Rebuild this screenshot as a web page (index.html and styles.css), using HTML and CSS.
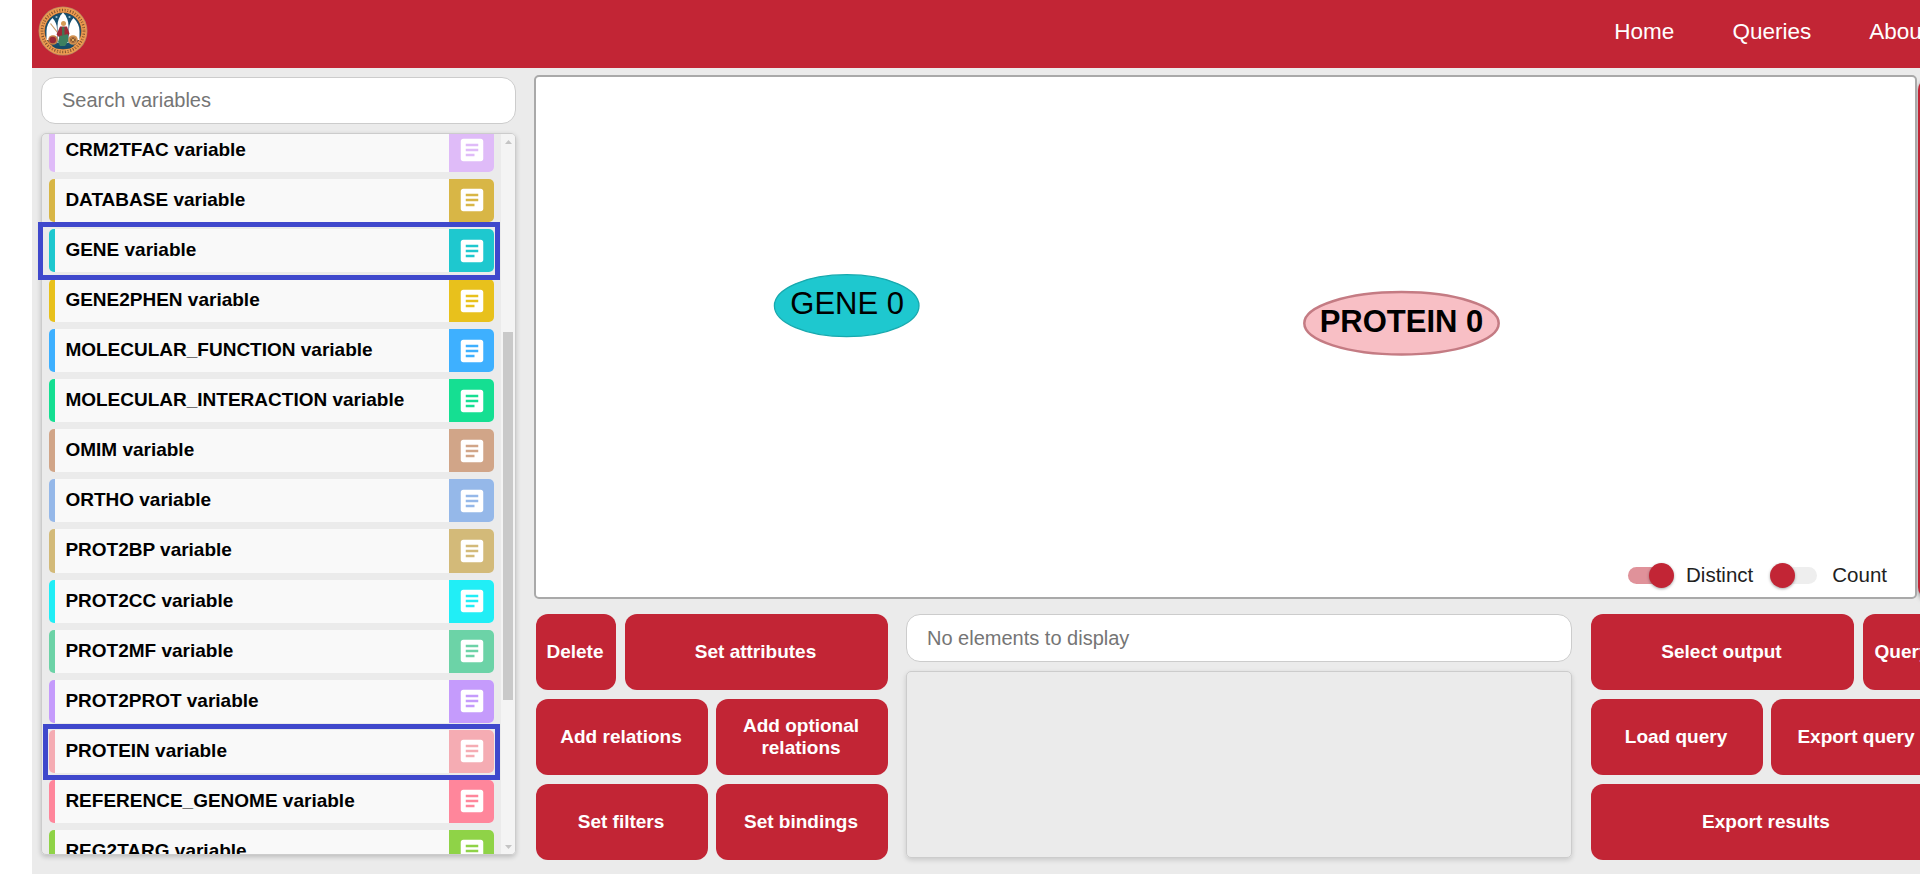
FILE: index.html
```html
<!DOCTYPE html>
<html lang="en">
<head>
<meta charset="utf-8">
<title>Query builder</title>
<link rel="stylesheet" href="styles.css">
</head>
<body>
<svg class="sprite" aria-hidden="true">
  <symbol id="article" viewBox="0 0 24 24">
    <path d="M19 3H5c-1.100 0-2 .9-2 2v14c0 1.100.9 2 2 2h14c1.100 0 2-.9 2-2V5c0-1.100-.9-2-2-2zm-5 14H7v-2h7v2zm3-4H7v-2h10v2zm0-4H7V7h10v2z"/>
  </symbol>
</svg>
<div class="app">
  <header class="topbar">
    <svg class="logo" viewBox="0 0 50 50" aria-label="University seal">
      <circle cx="25" cy="25" r="24.500" fill="#b98560"/>
      <circle cx="25" cy="25" r="23.700" fill="#ee9c50"/>
      <circle cx="25" cy="25" r="21" fill="none" stroke="#5a3824" stroke-width="2.600" stroke-dasharray="1.200 1.500" opacity=".75"/>
      <circle cx="25" cy="25" r="21" fill="none" stroke="#ee9c50" stroke-width=".8" stroke-dasharray="2.100 1.700"/>
      <circle cx="25" cy="25" r="18.500" fill="#7a4a2c"/>
      <circle cx="25" cy="25" r="18" fill="#17506f"/>
      <path d="M25 6.500c-4 4-5.500 8.500-5.500 13.500v17h11V20c0-5-1.500-9.500-5.500-13.500z" fill="#fff"/>
      <path d="M14.500 12c-4 4-6 8-6 13v9H19V23c0-4-1.500-8-4.500-11zM35.500 12c4 4 6 8 6 13v9H31V23c0-4 1.500-8 4.500-11z" fill="#fff"/>
      <circle cx="18.500" cy="11" r="1.100" fill="#9fc0d0"/><circle cx="31.500" cy="11" r="1.100" fill="#9fc0d0"/>
      <path d="M12.500 17.500l7 9" stroke="#c79b6a" stroke-width="1.200"/>
      <circle cx="25.500" cy="17.500" r="2.500" fill="#d59a55"/>
      <path d="M22 20.500h7l2.500 7-2 4h-8l-3-3z" fill="#9d2836"/>
      <path d="M24 21h2.500v8H24z" fill="#487050"/>
      <path d="M21.500 30l8.500-2 .5 7-3.500 5h-5l-2-4z" fill="#3d8060"/>
      <circle cx="15" cy="34" r="4.800" fill="#c67d45"/><circle cx="14.700" cy="34" r="3.300" fill="#982938"/>
      <circle cx="35" cy="34" r="4.800" fill="#d1904f"/><circle cx="35" cy="34" r="2.800" fill="#8c5732"/>
      <path d="M33.500 32.500l3 3m0-3l-3 3" stroke="#e0b05e"/>
      <path d="M14 40h22l-4 2.500H18z" fill="#174b68"/>
    </svg>
    <nav class="nav"><a>Home</a><a>Queries</a><a>About</a></nav>
  </header>
  <main class="main">
    <aside class="sidebar">
      <input class="field search" placeholder="Search variables">
      <div class="list">
        <div class="items">
          <div class="item crm"><span>CRM2TFAC variable</span><i><svg><use href="#article"/></svg></i></div>
          <div class="item db"><span>DATABASE variable</span><i><svg><use href="#article"/></svg></i></div>
          <div class="item gene"><span>GENE variable</span><i><svg><use href="#article"/></svg></i></div>
          <div class="item g2p"><span>GENE2PHEN variable</span><i><svg><use href="#article"/></svg></i></div>
          <div class="item mf"><span>MOLECULAR_FUNCTION variable</span><i><svg><use href="#article"/></svg></i></div>
          <div class="item mi"><span>MOLECULAR_INTERACTION variable</span><i><svg><use href="#article"/></svg></i></div>
          <div class="item omim"><span>OMIM variable</span><i><svg><use href="#article"/></svg></i></div>
          <div class="item ortho"><span>ORTHO variable</span><i><svg><use href="#article"/></svg></i></div>
          <div class="item p2bp"><span>PROT2BP variable</span><i><svg><use href="#article"/></svg></i></div>
          <div class="item p2cc"><span>PROT2CC variable</span><i><svg><use href="#article"/></svg></i></div>
          <div class="item p2mf"><span>PROT2MF variable</span><i><svg><use href="#article"/></svg></i></div>
          <div class="item p2p"><span>PROT2PROT variable</span><i><svg><use href="#article"/></svg></i></div>
          <div class="item prot"><span>PROTEIN variable</span><i><svg><use href="#article"/></svg></i></div>
          <div class="item ref"><span>REFERENCE_GENOME variable</span><i><svg><use href="#article"/></svg></i></div>
          <div class="item reg"><span>REG2TARG variable</span><i><svg><use href="#article"/></svg></i></div>
        </div>
        <div class="scrollbar">
          <svg class="arrow" viewBox="0 0 7 4"><path d="M0 4L3.500 0 7 4z"/></svg>
          <div class="thumb"></div>
          <svg class="arrow" viewBox="0 0 7 4"><path d="M0 0h7L3.500 4z"/></svg>
        </div>
      </div>
    </aside>
    <section class="workspace">
      <div class="canvas-row">
        <div class="canvas">
          <svg class="graph" viewBox="0 0 1379 520">
            <ellipse cx="310.700" cy="228.700" rx="72.300" ry="31" fill="#1ec8cf" stroke="#17a9ae" stroke-width="1.300"/>
            <text x="311.200" y="236.500">GENE 0</text>
            <ellipse cx="865.500" cy="246.300" rx="97.200" ry="31.200" fill="#f8bfc5" stroke="#c47b83" stroke-width="2.500"/>
            <text x="865.500" y="254.500" class="bold">PROTEIN 0</text>
          </svg>
          <div class="toggles">
            <span class="switch on"></span><span class="label first">Distinct</span>
            <span class="switch"></span><span class="label">Count</span>
          </div>
        </div>
        <div class="drawer"></div>
      </div>
      <div class="controls">
        <div class="buttons">
          <button class="w-s">Delete</button><button class="w-l">Set attributes</button>
          <button class="w-m">Add relations</button><button class="w-m">Add optional relations</button>
          <button class="w-m">Set filters</button><button class="w-m">Set bindings</button>
        </div>
        <div class="elements">
          <input class="field" placeholder="No elements to display">
          <div class="panel"></div>
        </div>
        <div class="buttons">
          <button class="w-l">Select output</button><button class="w-s">Query</button>
          <button class="w-m">Load query</button><button class="w-m">Export query</button>
          <button class="w-full">Export results</button>
        </div>
      </div>
    </section>
  </main>
</div>
<div class="mark mark-gene"></div>
<div class="mark mark-protein"></div>
</body>
</html>
```
FILE: styles.css
```css
* { box-sizing: border-box; }
html { overflow: hidden; }
body {
  margin: 0;
  padding-left: 32px;
  height: 877px;
  background: #fff;
  font-family: "Liberation Sans", Arial, sans-serif;
  overflow: hidden;
}
.sprite { display: none; }
.app { width: 1920px; height: 874px; background: #ebebeb; }

.topbar {
  display: flex;
  align-items: flex-start;
  justify-content: space-between;
  height: 68px;
  padding: 6px 24px 0 6px;
  background: #c22535;
}
.logo { width: 50px; height: 50px; }
.nav { display: flex; gap: 58px; padding-top: 13px; font-size: 22.500px; line-height: 26px; color: #fff; }

.main { display: flex; gap: 18px; height: 806px; padding: 7px 0 0 9px; }
.sidebar { width: 475px; padding-top: 2px; flex: none; }
.field {
  display: block;
  width: 100%;
  height: 48px;
  padding: 0 20px;
  border: 1px solid #ccc;
  border-radius: 14px;
  background: #fff;
  font: 20px "Liberation Sans", Arial, sans-serif;
}
.field::placeholder { color: #757575; opacity: 1; }
.search { height: 47px; padding-bottom: 1px; }

.list {
  display: flex;
  justify-content: space-between;
  height: 722px;
  margin-top: 9px;
  border: 1px solid #ccc;
  border-radius: 5px;
  overflow: hidden;
  box-shadow: 0 2px 5px rgba(0, 0, 0, .2);
}
.items { width: 445px; margin: -5.200px 0 0 7px; }
.item {
  display: flex;
  justify-content: space-between;
  height: 43.080px;
  margin-bottom: 7px;
  border-left: 6px solid var(--c);
  border-radius: 5px;
  background: #f9f9f9;
  overflow: hidden;
}
.item span { padding-left: 10.400px; font-weight: bold; font-size: 19px; line-height: 41px; white-space: nowrap; color: #000; }
.item i { display: flex; align-items: center; justify-content: center; width: 45px; background: var(--c); }
.item svg { width: 30px; height: 30px; fill: #fff; }
.crm { --c: #dfbbf8; }
.db { --c: #d8b646; }
.gene { --c: #1ec8cf; }
.g2p { --c: #e8c11c; }
.mf { --c: #3eb0ff; }
.mi { --c: #15df92; }
.omim { --c: #d1a588; }
.ortho { --c: #95b8e9; }
.p2bp { --c: #d3ba79; }
.p2cc { --c: #21eef6; }
.p2mf { --c: #6cd3a7; }
.p2p { --c: #c59bfc; }
.prot { --c: #f5acb3; }
.ref { --c: #ff869b; }
.reg { --c: #8fd347; }

.scrollbar { display: flex; flex-direction: column; align-items: center; width: 14px; padding: 6px 0 5px; background: #f4f4f4; }
.arrow { width: 7px; height: 4px; fill: #c4c4c4; }
.thumb { width: 10px; height: 368px; margin: 188px 0 auto; background: #c9c9c9; }

.workspace { flex: none; width: 1409px; }
.canvas-row { display: flex; gap: 1px; height: 524px; }
.canvas {
  position: relative;
  flex: none;
  width: 1383px;
  border: 2px solid #a9a9a9;
  border-radius: 5px;
  background: #fff;
}
.graph { display: block; width: 1379px; height: 520px; font-size: 31px; text-anchor: middle; }
.bold { font-weight: bold; }
.drawer { flex: 1; margin: 3px 0 0; border-radius: 12px 0 0 12px; background: #c22535; box-shadow: 0 2px 5px rgba(0, 0, 0, .4); }

.toggles { position: absolute; right: 28px; bottom: 9px; display: flex; align-items: center; height: 26px; }
.switch { position: relative; width: 43px; height: 17px; border-radius: 9px; background: #eee; }
.switch::after {
  content: "";
  position: absolute;
  left: -4px;
  top: -4px;
  width: 25px;
  height: 25px;
  border-radius: 50%;
  background: #c22535;
  box-shadow: 0 1px 3px rgba(0, 0, 0, .35);
}
.on { background: #e0929a; }
.on::after { left: 21px; }
.label { margin-left: 15px; font-size: 20.500px; line-height: 24px; color: #212121; padding-bottom: 1px; }
.first { margin-right: 21px; }

.controls { display: flex; padding: 15px 0 0 2px; }
.buttons { display: flex; flex-wrap: wrap; justify-content: space-between; gap: 9px 0; width: 352px; height: 246px; flex: none; }
.buttons button {
  height: 76px;
  padding: 0 11px 1px 9px;
  border: 0;
  border-radius: 12px;
  background: #c22535;
  color: #fff;
  font: bold 19px/22px "Liberation Sans", Arial, sans-serif;
}
.w-s { width: 80px; }
.w-m { width: 172px; }
.w-l { width: 263px; }
.w-full { width: 100%; }
.elements { width: 666px; margin: 0 19px 0 18px; flex: none; }
.panel { height: 187px; margin-top: 9px; border: 1px solid #ccc; border-radius: 5px; box-shadow: 0 2px 5px rgba(0, 0, 0, .15); }

/* Highlight frames over the list */
.mark { position: absolute; border: 5px solid #3f48cc; }
.mark-gene { left: 38px; top: 222px; width: 462px; height: 58px; }
.mark-protein { left: 43px; top: 724px; width: 457px; height: 56px; }
```
